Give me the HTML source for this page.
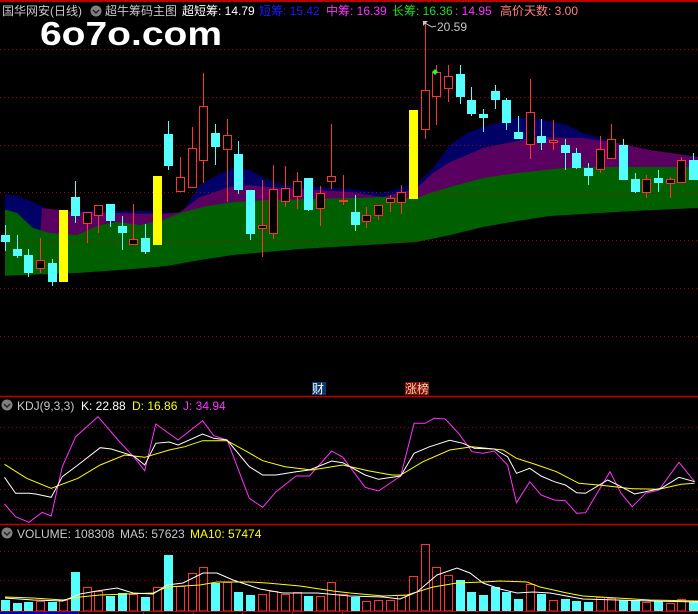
<!DOCTYPE html>
<html><head><meta charset="utf-8">
<style>
html,body{margin:0;padding:0;background:#000;width:698px;height:614px;overflow:hidden}
svg{display:block}
text{font-family:"Liberation Sans","Noto Sans CJK SC",sans-serif;font-size:12px}
</style></head>
<body>
<svg id="s" width="698" height="614" viewBox="0 0 698 614" xmlns="http://www.w3.org/2000/svg">
<defs><clipPath id="bc"><rect x="5" y="100" width="693" height="185"/></clipPath></defs>
<rect width="698" height="614" fill="#000"/>
<g id="bands" clip-path="url(#bc)"></g>
<g id="grid" stroke="#a00000" stroke-width="1" stroke-dasharray="1,3">
<line x1="0" y1="49.5" x2="698" y2="49.5"/>
<line x1="0" y1="97.5" x2="698" y2="97.5"/>
<line x1="0" y1="145.5" x2="698" y2="145.5"/>
<line x1="0" y1="192.5" x2="698" y2="192.5"/>
<line x1="0" y1="240.5" x2="698" y2="240.5"/>
<line x1="0" y1="288.5" x2="698" y2="288.5"/>
<line x1="0" y1="336.5" x2="698" y2="336.5"/>
<line x1="0" y1="427.5" x2="698" y2="427.5"/>
<line x1="0" y1="458.5" x2="698" y2="458.5"/>
<line x1="0" y1="489.5" x2="698" y2="489.5"/>
<line x1="0" y1="509.5" x2="698" y2="509.5"/>
<line x1="0" y1="551.5" x2="698" y2="551.5"/>
<line x1="0" y1="580.5" x2="698" y2="580.5"/>
</g>
<g id="candles"></g>
<g id="vol"></g>
<g id="lines" fill="none" stroke-width="1"></g>
<line x1="0" y1="1" x2="698" y2="1" stroke="#c00000" stroke-width="2"/>
<line x1="0" y1="396.5" x2="698" y2="396.5" stroke="#c00000" stroke-width="1.5"/>
<line x1="0" y1="524.5" x2="698" y2="524.5" stroke="#c00000" stroke-width="1.5"/>
<line x1="0" y1="611.5" x2="698" y2="611.5" stroke="#c00000" stroke-width="1"/>
<rect x="0" y="612" width="78" height="2" fill="#0000c0"/>
<g stroke="#c00000"><line x1="78.5" y1="611" x2="78.5" y2="614"/><line x1="143.5" y1="611" x2="143.5" y2="614"/><line x1="193.5" y1="611" x2="193.5" y2="614"/><line x1="242.5" y1="611" x2="242.5" y2="614"/><line x1="292.5" y1="611" x2="292.5" y2="614"/><line x1="342.5" y1="611" x2="342.5" y2="614"/></g>

<text x="2" y="15" fill="#c8c8c8">国华网安(日线)</text>
<circle cx="96" cy="11" r="5.5" fill="#808080"/><path d="M93 10 L96 13 L99 10" stroke="#222" stroke-width="1.5" fill="none"/>
<text x="105" y="15" fill="#c8c8c8">超牛筹码主图</text>
<text x="182" y="15" fill="#ffffff">超短筹: 14.79</text>
<text x="259" y="15" fill="#1a1aff">短筹: 15.42</text>
<text x="326" y="15" fill="#ff33ff">中筹: 16.39</text>
<text x="392" y="15" fill="#22dd22">长筹: 16.36</text>
<text x="455" y="15" fill="#ff33ff">: 14.95</text>
<text x="500" y="15" fill="#ff8080">高价天数: 3.00</text>
<text x="40" y="45" fill="#ffffff" textLength="182" lengthAdjust="spacingAndGlyphs" style="font-size:33px;font-weight:bold">6o7o.com</text>
<text x="437" y="31" fill="#c8c8c8">20.59</text>
<path d="M425 23 L432 27 L436 26" stroke="#c8c8c8" fill="none"/>
<path d="M423 21 L428 21 L423 26 Z" fill="#c8c8c8"/>
<path d="M435 69 L438 72 L435 75 L432 72 Z" fill="#22ff22"/>

<rect x="312" y="382" width="14" height="13" fill="#0a3a6a"/><text x="312" y="393" fill="#fff">财</text>
<rect x="405" y="382" width="24" height="13" fill="#7a1010"/><text x="405" y="393" fill="#ffd0a0">涨榜</text>

<circle cx="7" cy="405" r="5.5" fill="#808080"/><path d="M4 404 L7 407 L10 404" stroke="#222" stroke-width="1.5" fill="none"/>
<text x="17" y="410" fill="#c8c8c8">KDJ(9,3,3)</text>
<text x="81" y="410" fill="#ffffff">K: 22.88</text>
<text x="132" y="410" fill="#ffff00">D: 16.86</text>
<text x="183" y="410" fill="#ff33ff">J: 34.94</text>

<circle cx="7" cy="533" r="5.5" fill="#808080"/><path d="M4 532 L7 535 L10 532" stroke="#222" stroke-width="1.5" fill="none"/>
<text x="17" y="538" fill="#c8c8c8">VOLUME: 108308</text>
<text x="120" y="538" fill="#c8c8c8">MA5: 57623</text>
<text x="190" y="538" fill="#ffff00">MA10: 57474</text>
</svg>
<script>
var NS="http://www.w3.org/2000/svg";
function el(p,t,a){var e=document.createElementNS(NS,t);for(var k in a)e.setAttribute(k,a[k]);document.getElementById(p).appendChild(e);return e;}
function area(top,fill){var d="M"+top.map(function(p){return p[0]+" "+p[1]}).join(" L")+" L698 380 L0 380";
 el("bands","path",{d:d+" Z",fill:fill});}
var navy=[[0,193],[17,196],[33,202],[43,207],[50,220],[55,232],[77,232],[78,211],[160,211],[175,214],[180,215],[200,185],[217,175],[233,168],[250,170],[267,180],[283,185],[350,189],[383,193],[417,183],[433,168],[450,145],[467,133],[483,127],[500,122],[517,118],[533,118],[550,121],[567,125],[583,133],[617,143],[650,152],[698,157]];
var purple=[[0,240],[40,240],[42,208],[77,212],[160,214],[175,213],[180,212],[200,197],[233,186],[250,185],[267,187],[350,192],[383,197],[417,188],[433,173],[450,162],[467,155],[483,148],[517,141],[533,137],[583,138],[617,143],[650,150],[698,157]];
var green=[[0,208],[17,213],[33,228],[50,233],[77,235],[100,225],[117,222],[140,225],[163,220],[180,213],[207,206],[233,202],[267,200],[350,198],[383,197],[417,198],[430,193],[450,187],[483,178],[517,173],[537,171],[563,168],[583,167],[698,167]];
var gbot=[[0,276],[77,273],[133,269],[167,266],[200,260],[233,255],[267,252],[300,249],[350,246],[417,242],[450,235],[483,227],[517,221],[550,216],[583,214],[633,211],[698,208]];
area(navy,"#000066");area(purple,"#5a0060");area(green,"#006000");
el("bands","path",{d:"M"+gbot.map(function(p){return p[0]+" "+p[1]}).join(" L")+" L698 400 L0 400 Z",fill:"#000"});
var C=[["c",235,242,225,251],["c",249,256,235,258],["c",255,273,249,277],["r",260,269,238,273],["c",263,282,259,286],["y",210,282,210,282],
["c",197,216,181,223],["r",212,224,212,243],["r",205,216,205,233],["c",204,221,204,227],["c",226,233,216,250],["r",239,245,204,245],["c",238,252,224,254],["y",176,245,176,247],
["c",134,166,121,170],["r",177,192,157,192],["r",148,188,127,188],["r",106,161,73,183],["c",133,147,124,165],["r",135,150,119,202],["c",154,190,141,194],["c",190,234,190,240],
["r",225,229,180,257],["r",189,234,165,239],["r",188,202,166,207],["r",181,197,172,209],["c",178,210,178,211],["r",193,209,186,226],["r",176,182,124,189],["r",200,202,175,205],
["c",212,225,195,231],["r",215,222,207,228],["r",205,216,205,220],["r",198,203,195,212],["r",192,203,185,214],["y",110,199,110,199],["r",90,130,22,139],["r",72,97,65,125],["r",76,89,65,102],
["c",74,97,65,104],["c",100,114,87,116],["c",114,118,109,132],["c",91,100,85,109],["c",100,123,98,130],["c",132,139,116,139],["r",112,145,79,159],["c",136,143,119,150],["r",140,143,120,150],
["c",145,153,139,170],["c",153,168,148,169],["c",168,176,163,185],["r",149,170,136,173],["r",139,159,124,159],["c",145,180,139,180],["c",179,192,173,193],["r",179,193,175,198],["c",178,183,170,192],["r",179,184,177,198],["r",160,183,157,183],["c",160,180,153,180]];
var V=[600,603,602,601,602,600,572,587,591,596,593,594,597,587,555,586,573,567,583,582,592,595,594,591,594,592,596,596,582,594,597,601,600,600,595,576,544,567,575,580,592,595,587,592,599,584,594,600,599,601,602,597,598,600,600,602,601,603,599,602];
C.forEach(function(c,i){var x=Math.round(1+11.66*i);var cx=x+4.5;
 var col=c[0]=="c"?"#55ffff":c[0]=="r"?"#ff3333":"#ffff00";
 if(c[0]!="y"){el("candles","line",{x1:cx,y1:c[3],x2:cx,y2:c[4],stroke:col});}
 if(c[0]=="r"){el("candles","rect",{x:x+0.5,y:c[1]+0.5,width:8,height:Math.max(c[2]-c[1]-1,1),fill:"#000",stroke:col});}
 else el("candles","rect",{x:x,y:c[1],width:9,height:Math.max(c[2]-c[1],1),fill:col});
 var v=V[i];var vc=c[0]=="c"?"#55ffff":"#ff3333";
 if(c[0]=="c")el("vol","rect",{x:x,y:v,width:9,height:611-v,fill:vc});
 else el("vol","rect",{x:x+0.5,y:v+0.5,width:8,height:611-v-0.5,fill:"none",stroke:vc});
});
function pl(pts,col,sx,ox,sy,oy){el("lines","polyline",{points:pts.map(function(p){return (ox+p[0]/sx).toFixed(1)+","+(oy+p[1]/sy).toFixed(1)}).join(" "),stroke:col});}
var J=[[10,402],[35,440],[65,457],[95,427],[115,438],[140,290],[170,200],[220,140],[265,210],[300,260],[325,302],[350,162],[400,210],[455,152],[480,197],[510,210],[560,385],[590,412],[620,365],[665,318],[695,318],[745,243],[770,262],[820,352],[850,363],[900,318],[930,160],[955,160],[975,145],[1000,147],[1030,190],[1060,245],[1085,250],[1110,243],[1140,285],[1160,398],[1190,335],[1215,375],[1245,390],[1270,392],[1295,430],[1315,428],[1370,305],[1395,370],[1420,410],[1450,370],[1480,360],[1525,277],[1560,335]];
var K=[[10,322],[35,370],[65,370],[80,372],[115,382],[140,320],[175,285],[225,233],[250,237],[300,258],[325,285],[350,220],[380,216],[400,225],[455,192],[480,205],[510,210],[560,290],[590,315],[620,315],[665,305],[695,300],[745,273],[770,278],[820,315],[850,328],[900,318],[930,250],[965,230],[1010,211],[1040,220],[1065,235],[1110,237],[1140,260],[1160,310],[1190,295],[1215,318],[1245,335],[1270,345],[1295,368],[1315,370],[1365,330],[1395,350],[1425,372],[1450,365],[1485,355],[1525,322],[1560,335]];
var D=[[10,283],[60,325],[115,355],[175,325],[225,285],[280,255],[325,262],[380,240],[415,230],[455,212],[510,212],[555,245],[590,272],[640,290],[700,300],[770,285],[830,303],[880,315],[900,315],[950,275],[1010,240],[1060,230],[1130,240],[1160,265],[1200,282],[1250,305],[1300,340],[1350,346],[1420,356],[1480,358],[1530,343],[1560,340]];
pl(J,"#ff33ff",2.246,0,3,370);pl(D,"#ffff00",2.246,0,3,370);pl(K,"#ffffff",2.246,0,3,370);
var W=[[5,598],[33,600],[63,601],[80,594],[97,591],[117,588],[133,593],[153,594],[167,585],[183,583],[203,573],[217,573],[233,580],[260,589],[283,593],[317,593],[350,596],[383,597],[400,599],[417,592],[437,575],[457,568],[470,573],[483,583],[500,589],[517,593],[533,592],[550,593],[583,599],[617,600],[650,601],[698,602]];
var Y=[[5,597],[33,598],[63,600],[80,597],[100,595],[127,594],[153,593],[167,587],[200,585],[217,582],[250,582],[267,583],[300,586],[333,591],[350,593],[383,596],[407,595],[433,587],[457,583],[483,582],[500,581],[527,582],[540,587],[567,593],[583,596],[617,598],[650,600],[698,601]];
pl(Y,"#ffff00",1,0,1,0);pl(W,"#ffffff",1,0,1,0);
</script>
</body></html>
